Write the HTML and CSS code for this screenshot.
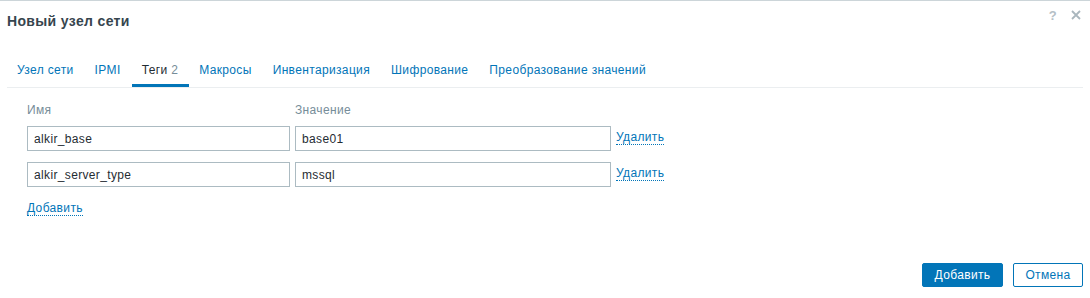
FILE: index.html
```html
<!DOCTYPE html>
<html lang="ru">
<head>
    <meta charset="UTF-8">
    <title>Новый узел сети</title>
    <link rel="stylesheet" href="styles.css">
</head>
<body>
    <div class="dialog">
        <div class="dialog-header">
            <h4>Новый узел сети</h4>
            <div class="header-tools">
                <span class="help">?</span>
                <svg class="close" width="10" height="10" viewBox="0 0 10 10">
                    <path d="M1 1 L9 9 M9 1 L1 9" stroke="#a9b6bd" stroke-width="1.8" fill="none"/>
                </svg>
            </div>
        </div>

        <ul class="tabs">
            <li><a href="#">Узел сети</a></li>
            <li><a href="#">IPMI</a></li>
            <li class="active"><a href="#">Теги <span class="count">2</span></a></li>
            <li><a href="#">Макросы</a></li>
            <li><a href="#">Инвентаризация</a></li>
            <li><a href="#">Шифрование</a></li>
            <li><a href="#">Преобразование значений</a></li>
        </ul>

        <div class="tab-content">
            <div class="tags-table">
                <div class="col-label">Имя</div>
                <div class="col-label">Значение</div>
                <div></div>

                <input type="text" value="alkir_base">
                <input type="text" value="base01">
                <a href="#" class="link-action">Удалить</a>

                <input type="text" value="alkir_server_type">
                <input type="text" value="mssql">
                <a href="#" class="link-action">Удалить</a>
            </div>
            <a href="#" class="link-action add-link">Добавить</a>
        </div>

        <div class="dialog-footer">
            <button class="btn-primary">Добавить</button>
            <button class="btn-alt">Отмена</button>
        </div>
    </div>
</body>
</html>
```

FILE: styles.css
```css
body {
    margin: 0;
    background: #fff;
    font-family: "Liberation Sans", Arial, sans-serif;
    font-size: 12px;
    letter-spacing: 0.35px;
    color: #1f2c33;
}
.dialog {
    height: 298px;
    box-sizing: border-box;
    border-top: 1px solid #ccd5d9;
    display: flex;
    flex-direction: column;
}
.dialog-header {
    height: 40px;
    padding: 0 7px;
    display: flex;
    align-items: center;
    justify-content: space-between;
}
.dialog-header h4 {
    margin: 0;
    font-size: 14px;
    font-weight: bold;
    color: #36454e;
}
.header-tools {
    display: flex;
    align-items: center;
    gap: 14px;
    margin-top: -12px;
    padding-right: 2px;
}
.help {
    color: #b5c0c6;
    font-size: 13px;
    font-weight: bold;
}
.tabs {
    list-style: none;
    margin: 15px 7px 0;
    padding: 0;
    display: flex;
    border-bottom: 1px solid #ebeef0;
}
.tabs li {
    padding: 0 11px 0 10px;
    height: 28px;
    line-height: 28px;
    border-bottom: 3px solid transparent;
}
.tabs li a {
    color: #0275b8;
    text-decoration: none;
}
.tabs li.active {
    border-bottom-color: #0275b8;
}
.tabs li.active a {
    color: #1f2c33;
}
.tabs .count {
    color: #768d99;
}
.tab-content {
    padding: 15px 27px 0;
    flex: 1;
}
.tags-table {
    display: grid;
    grid-template-columns: 263px 316px auto;
    column-gap: 5px;
    row-gap: 11px;
    align-items: center;
    justify-items: start;
}
.col-label {
    color: #768d99;
    line-height: 14px;
    margin-bottom: -2px;
}
.tags-table input {
    width: 100%;
    height: 25px;
    box-sizing: border-box;
    border: 1px solid #acbbc2;
    padding: 0 6px;
    font-family: inherit;
    font-size: 12px;
    letter-spacing: inherit;
    color: #1f2c33;
    margin: 0;
}
.link-action {
    color: #0275b8;
    text-decoration: none;
    border-bottom: 1px dotted #0275b8;
    line-height: 13px;
    margin-top: -2px;
}
.add-link {
    display: inline-block;
    margin-top: 15px;
}
.dialog-footer {
    display: flex;
    justify-content: flex-end;
    gap: 10px;
    padding: 0 7px 11px;
}
.dialog-footer button {
    height: 24px;
    padding: 0 10px;
    font-family: inherit;
    font-size: 12px;
    letter-spacing: inherit;
    border-radius: 2px;
    cursor: pointer;
}
.btn-primary {
    background: #0275b8;
    border: 1px solid #0275b8;
    color: #fff;
    min-width: 81px;
}
.btn-alt {
    background: #fff;
    border: 1px solid #0275b8;
    color: #0275b8;
    min-width: 70px;
}
```
